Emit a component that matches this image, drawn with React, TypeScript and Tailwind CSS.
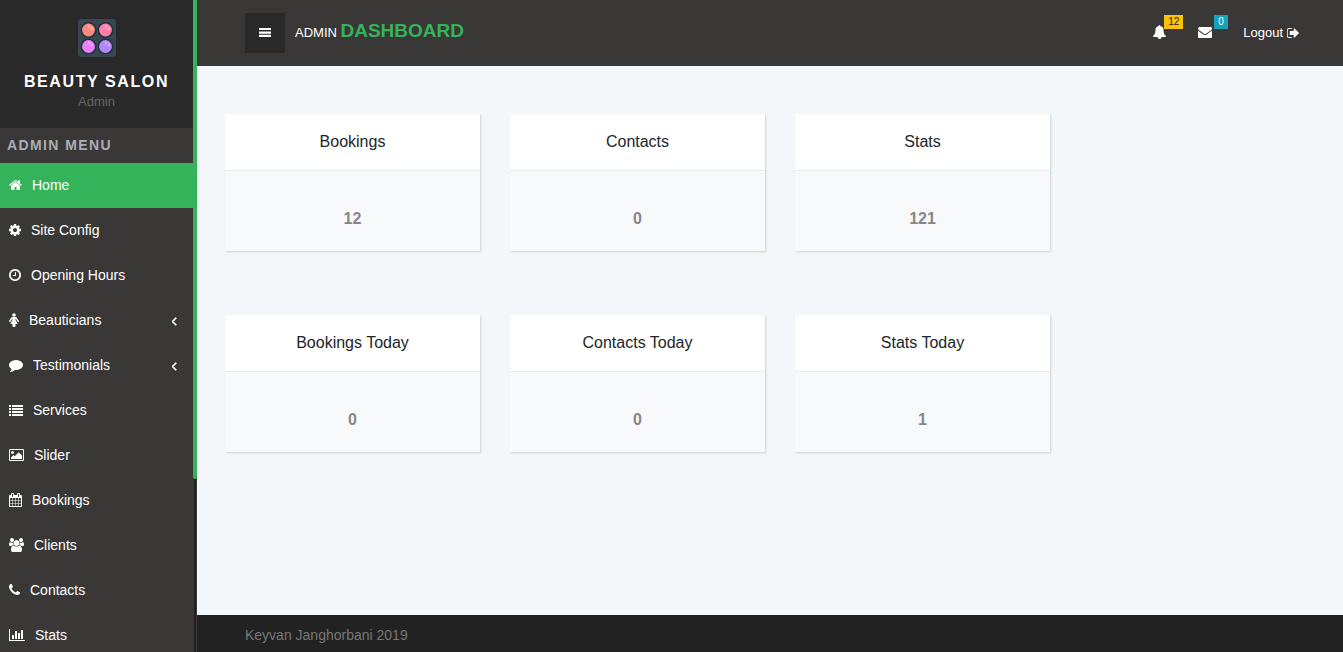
import { useState } from 'react';

type IconProps = { d: string; box?: string; className?: string };

// Font Awesome 4 glyphs, drawn on the 1792 grid
const icons = {
  home: 'M1472 992v480q0 26-19 45t-45 19h-384v-384h-256v384h-384q-26 0-45-19t-19-45v-480q0-1 .5-3t.5-3l575-474 575 474q1 2 1 6zm223-69l-62 74q-8 9-21 11h-3q-13 0-21-7l-692-577-692 577q-12 8-24 7-13-2-21-11l-62-74q-8-10-7-23.5t11-21.5l719-599q32-26 76-26t76 26l244 204v-195q0-14 9-23t23-9h192q14 0 23 9t9 23v408l219 182q10 8 11 21.5t-7 23.5z',
  cog: 'M1152 896q0-106-75-181t-181-75-181 75-75 181 75 181 181 75 181-75 75-181zm512-109v222q0 12-8 23t-20 13l-185 28q-19 54-39 91 35 50 107 138 10 12 10 25t-9 23q-27 37-99 108t-94 71q-12 0-26-9l-138-108q-44 23-91 38-16 136-29 186-7 28-36 28h-222q-14 0-24.5-8.5t-11.5-21.5l-28-184q-49-16-90-37l-141 107q-10 9-25 9-14 0-25-11-126-114-165-168-7-10-7-23 0-12 8-23 15-21 51-66.5t54-70.5q-27-50-41-99l-183-27q-13-2-21-12.5t-8-23.5v-222q0-12 8-23t19-13l186-28q14-46 39-92-40-57-107-138-10-12-10-24 0-10 9-23 26-36 98.5-107.5t94.5-71.5q13 0 26 10l138 107q44-23 91-38 16-136 29-186 7-28 36-28h222q14 0 24.5 8.5t11.5 21.5l28 184q49 16 90 37l142-107q9-9 24-9 13 0 25 10 129 119 165 170 7 8 7 22 0 12-8 23-15 21-51 66.5t-54 70.5q26 50 41 98l183 28q13 2 21 12.5t8 23.5z',
  clock: 'M1024 544v448q0 14-9 23t-23 9h-320q-14 0-23-9t-9-23v-64q0-14 9-23t23-9h224v-352q0-14 9-23t23-9h64q14 0 23 9t9 23zm416 352q0-148-73-273t-198-198-273-73-273 73-198 198-73 273 73 273 198 198 273 73 273-73 198-198 73-273zm224 0q0 209-103 385.5t-279.5 279.5-385.5 103-385.5-103-279.5-279.5-103-385.5 103-385.5 279.5-279.5 385.5-103 385.5 103 279.5 279.5 103 385.5z',
  female: 'M1536 1056q0 40-28 68t-68 28q-51 0-80-43l-227-341h-45v132l247 411q9 15 9 33 0 26-19 45t-45 19h-192v272q0 46-33 79t-79 33h-160q-46 0-79-33t-33-79v-272h-192q-26 0-45-19t-19-45q0-18 9-33l247-411v-132h-45l-227 341q-29 43-80 43-40 0-68-28t-28-68q0-29 16-53l256-384q73-107 176-107h384q103 0 176 107l256 384q16 24 16 53zm-416-800q0 93-65.5 158.5t-158.5 65.5-158.5-65.5-65.5-158.5 65.5-158.5 158.5-65.5 158.5 65.5 65.5 158.5z',
  comment: 'M1792 896q0 174-120 321.5t-326 233-450 85.5q-70 0-145-8-198 175-460 242-49 14-114 22-17 2-30.5-9t-17.5-29v-1q-3-4-.5-12t2-10 4.5-9.5l6-9 7-8.5 8-9q7-8 31-34.5t34.5-38 31-39.5 32.5-51 27-59 26-76q-157-89-247.5-220t-90.5-281q0-130 71-248.5t191-204.5 286-136.5 348-50.5q244 0 450 85.5t326 233 120 321.5z',
  list: 'M0 256h256v256h-256zM384 256h1408v256h-1408zM0 640h256v256h-256zM384 640h1408v256h-1408zM0 1024h256v256h-256zM384 1024h1408v256h-1408zM0 1408h256v256h-256zM384 1408h1408v256h-1408z',
  picture: 'M704 576q0 80-56 136t-136 56-136-56-56-136 56-136 136-56 136 56 56 136zm1024 384v448h-1408v-192l320-320 160 160 512-512zm96-704h-1600q-13 0-22.5 9.5t-9.5 22.5v1216q0 13 9.5 22.5t22.5 9.5h1600q13 0 22.5-9.5t9.5-22.5v-1216q0-13-9.5-22.5t-22.5-9.5zm160 32v1216q0 66-47 113t-113 47h-1600q-66 0-113-47t-47-113v-1216q0-66 47-113t113-47h1600q66 0 113 47t47 113z',
  calendar: 'M192 1664h288v-288h-288v288zm352 0h320v-288h-320v288zm-352-352h288v-320h-288v320zm352 0h320v-320h-320v320zm-352-384h288v-288h-288v288zm736 736h320v-288h-320v288zm-384-736h320v-288h-320v288zm768 736h288v-288h-288v288zm-384-352h320v-320h-320v320zm-352-864v-288q0-13-9.5-22.5t-22.5-9.5h-64q-13 0-22.5 9.5t-9.5 22.5v288q0 13 9.5 22.5t22.5 9.5h64q13 0 22.5-9.5t9.5-22.5zm736 864h288v-320h-288v320zm-384-384h320v-288h-320v288zm384 0h288v-288h-288v288zm32-480v-288q0-13-9.5-22.5t-22.5-9.5h-64q-13 0-22.5 9.5t-9.5 22.5v288q0 13 9.5 22.5t22.5 9.5h64q13 0 22.5-9.5t9.5-22.5zm384-64v1280q0 52-38 90t-90 38h-1408q-52 0-90-38t-38-90v-1280q0-52 38-90t90-38h128v-96q0-66 47-113t113-47h64q66 0 113 47t47 113v96h384v-96q0-66 47-113t113-47h64q66 0 113 47t47 113v96h128q52 0 90 38t38 90z',
  users: 'M657 896q-162 5-265 128h-134q-82 0-138-40.5t-56-118.5q0-353 124-353 6 0 43.5 21t97.5 42.5 119 21.5q67 0 133-23-5 37-5 66 0 139 81 256zm1071 637q0 120-73 189.5t-194 69.5h-874q-121 0-194-69.5t-73-189.5q0-53 3.5-103.5t14-109 26.5-108.5 43-97.5 62-81 85.5-53.5 111.5-20q10 0 43 21.5t73 48 107 48 135 21.5 135-21.5 107-48 73-48 43-21.5q61 0 111.5 20t85.5 53.5 62 81 43 97.5 26.5 108.5 14 109 3.5 103.5zm-1024-1277q0 106-75 181t-181 75-181-75-75-181 75-181 181-75 181 75 75 181zm704 384q0 159-112.5 271.5t-271.5 112.5-271.5-112.5-112.5-271.5 112.5-271.5 271.5-112.5 271.5 112.5 112.5 271.5zm576 225q0 78-56 118.5t-138 40.5h-134q-103-123-265-128 81-117 81-256 0-29-5-66 66 23 133 23 59 0 119-21.5t97.5-42.5 43.5-21q124 0 124 353zm-128-609q0 106-75 181t-181 75-181-75-75-181 75-181 181-75 181 75 75 181z',
  phone: 'M1600 1240q0 27-10 70.5t-21 68.5q-21 50-122 106-94 51-186 51-27 0-53-3.5t-57.5-12.5-47-14.5-55.5-20.5-49-18q-98-35-175-83-127-79-264-216t-216-264q-48-77-83-175-3-9-18-49t-20.5-55.5-14.5-47-12.5-57.5-3.5-53q0-92 51-186 56-101 106-122 25-11 68.5-21t70.5-10q14 0 21 3 18 6 53 76 11 19 30 54t35 63.5 31 53.5q3 4 17.5 25t21.5 35.5 7 28.5q0 20-28.5 50t-62 55-62 53-28.5 46q0 9 5 22.5t8.5 20.5 14 24 11.5 19q76 137 174 235t235 174q2 1 19 11.5t24 14 20.5 8.5 22.5 5q18 0 46-28.5t53-62 55-62 50-28.5q14 0 28.5 7t35.5 21.5 25 17.5q25 15 53.5 31t63.5 35 54 30q70 35 76 53 3 7 3 21z',
  chart: 'M640 896v512h-256v-512h256zm384-512v1024h-256v-1024h256zm1024 1152v128h-2048v-1536h128v1408h1920zm-640-896v768h-256v-768h256zm384-384v1152h-256v-1152h256z',
  angleLeft: 'M1203 544q0 13-10 23l-393 393 393 393q10 10 10 23t-10 23l-50 50q-10 10-23 10t-23-10l-466-466q-10-10-10-23t10-23l466-466q10-10 23-10t23 10l50 50q10 10 10 23z',
  bell: 'M912 1696q0-16-16-16-59 0-101.5-42.5t-42.5-101.5q0-16-16-16t-16 16q0 73 51.5 124.5t124.5 51.5q16 0 16-16zm816-288q0 52-38 90t-90 38h-448q0 106-75 181t-181 75-181-75-75-181h-448q-52 0-90-38t-38-90q50-42 91-88t85-119.5 74.5-158.5 50-206 19.5-260q0-152 117-282.5t307-158.5q-8-19-8-39 0-40 28-68t68-28 68 28 28 68q0 20-8 39 190 28 307 158.5t117 282.5q0 139 19.5 260t50 206 74.5 158.5 85 119.5 91 88z',
  envelope: 'M1792 710v794q0 66-47 113t-113 47h-1472q-66 0-113-47t-47-113v-794q44 49 101 87 362 246 497 345 57 42 92.5 65.5t94.5 48 110 24.5h2q51 0 110-24.5t94.5-48 92.5-65.5q170-123 498-345 57-39 100-87zm0-294q0 79-49 151t-122 123q-376 261-468 325-10 7-42.5 31t-54 38.5-52 32.5-57.5 27-50 9h-2q-23 0-50-9t-57.5-27-52-32.5-54-38.5-42.5-31q-91-64-262-182.5t-205-142.5q-62-42-117-115.5t-55-136.5q0-78 41.5-130t118.5-52h1472q65 0 112.5 47t47.5 113z',
  signOut: 'M704 1440q0 4 1 20t.5 26.5-3 23.5-10 19.5-20.5 6.5h-320q-119 0-203.5-84.5t-84.5-203.5v-704q0-119 84.5-203.5t203.5-84.5h320q13 0 22.5 9.5t9.5 22.5q0 4 1 20t.5 26.5-3 23.5-10 19.5-20.5 6.5h-320q-66 0-113 47t-47 113v704q0 66 47 113t113 47h312l11.5 1 11.5 3 8 5.5 7 9 2 13.5zm928-544q0 26-19 45l-544 544q-19 19-45 19t-45-19-19-45v-288h-448q-26 0-45-19t-19-45v-384q0-26 19-45t45-19h448v-288q0-26 19-45t45-19 45 19l544 544q19 19 19 45z',
};

const menu = [
  { label: 'Home', icon: icons.home, box: '64 0 1664 1920', size: 'w-[13px]' },
  { label: 'Site Config', icon: icons.cog, box: '128 0 1536 1920', size: 'w-3' },
  { label: 'Opening Hours', icon: icons.clock, box: '128 0 1536 1920', size: 'w-3' },
  { label: 'Beauticians', icon: icons.female, box: '256 0 1280 1920', size: 'w-2.5', sub: true },
  { label: 'Testimonials', icon: icons.comment, box: '0 0 1792 1920', size: 'w-3.5', sub: true },
  { label: 'Services', icon: icons.list, box: '0 0 1792 1920', size: 'w-3.5' },
  { label: 'Slider', icon: icons.picture, box: '64 0 1920 1920', size: 'w-[15px]' },
  { label: 'Bookings', icon: icons.calendar, box: '64 0 1664 1920', size: 'w-[13px]' },
  { label: 'Clients', icon: icons.users, box: '64 0 1920 1920', size: 'w-[15px]' },
  { label: 'Contacts', icon: icons.phone, box: '192 0 1408 1920', size: 'w-[11px]' },
  { label: 'Stats', icon: icons.chart, box: '0 0 2048 1920', size: 'w-4' },
];

const cards = [
  [
    { title: 'Bookings', value: 12 },
    { title: 'Contacts', value: 0 },
    { title: 'Stats', value: 121 },
  ],
  [
    { title: 'Bookings Today', value: 0 },
    { title: 'Contacts Today', value: 0 },
    { title: 'Stats Today', value: 1 },
  ],
];

function Icon({ d, box = '0 0 1792 1920', className = 'w-3.5' }: IconProps) {
  return (
    <svg viewBox={box} fill="currentColor" aria-hidden="true" className={`h-[15px] shrink-0 ${className}`}>
      <path d={d} />
    </svg>
  );
}

function Logo() {
  const pans = [
    { x: 10.5, y: 11, color: '#ff8a80' },
    { x: 27.5, y: 11, color: '#ff80ab' },
    { x: 10.5, y: 27.5, color: '#ea80fc' },
    { x: 27.5, y: 27.5, color: '#b388ff' },
  ];
  return (
    <svg viewBox="0 0 38 38" className="size-[38px]" aria-hidden="true">
      <rect width="38" height="38" rx="4" fill="#37474f" />
      {pans.map(p => (
        <g key={p.color}>
          <circle cx={p.x} cy={p.y} r="8" fill="#263238" />
          <circle cx={p.x} cy={p.y} r="6.4" fill={p.color} />
          <circle cx={p.x + 0.5} cy={p.y - 3.5} r="0.9" fill="#fff" opacity="0.6" />
          <circle cx={p.x + 3.3} cy={p.y - 1.5} r="0.9" fill="#fff" opacity="0.6" />
        </g>
      ))}
    </svg>
  );
}

function Sidebar() {
  const [active, setActive] = useState('Home');

  return (
    <aside className="sticky top-0 flex h-screen w-[197px] shrink-0 overflow-hidden bg-[#3a3836]">
      <div className="min-w-0 flex-1">
        {/* Brand */}
        <div className="flex h-32 flex-col items-center bg-[#292929] pt-[19px]">
          <Logo />
          <h1 className="mt-3.5 text-base leading-[22px] font-bold tracking-widest whitespace-nowrap text-white">BEAUTY SALON</h1>
          <p className="text-[13px] leading-[18px] text-[#666]">Admin</p>
        </div>

        <h2 className="pl-[7px] text-sm leading-[35px] font-bold tracking-widest text-[#a9afb5]">ADMIN MENU</h2>

        {/* Menu */}
        <nav>
          <ul>
            {menu.map(item => (
              <li key={item.label}>
                <a
                  href="#"
                  onClick={() => setActive(item.label)}
                  className={`flex h-[45px] items-center gap-2.5 pr-4 pl-[9px] text-sm text-white ${active === item.label ? 'bg-[#35b35b]' : 'hover:bg-[#292929]'}`}
                >
                  <Icon d={item.icon} box={item.box} className={item.size} />
                  <span className="flex-1 pb-0.5">{item.label}</span>
                  {item.sub && <Icon d={icons.angleLeft} box="640 -128 640 1920" className="w-[5px] stroke-current stroke-[90]" />}
                </a>
              </li>
            ))}
          </ul>
        </nav>
      </div>

      {/* Scroll track */}
      <div className="flex w-1 flex-col">
        <div className="h-[73.4%] rounded-b-xs bg-[#35b35b]" />
        <div className="ml-px w-0.5 flex-1 bg-[#222]" />
      </div>
    </aside>
  );
}

function Header() {
  return (
    <header className="flex h-[66px] items-center justify-between bg-[#3a3836] pr-11 pl-12 text-white">
      <div className="flex items-center gap-2.5">
        <button type="button" aria-label="Toggle menu" className="flex size-10 items-center justify-center bg-[#292929]">
          <svg viewBox="0 0 12 10" fill="currentColor" aria-hidden="true" className="h-2.5 w-3">
            <path d="M0 -.4h12v2.3H0zM0 3.4h12v2.3H0zM0 6.8h12v2.2H0z" />
          </svg>
        </button>
        <a href="#" className="pb-1 text-[13px]">
          ADMIN <strong className="text-[19px] text-[#35b35b]">DASHBOARD</strong>
        </a>
      </div>

      <div className="flex items-center text-[13px]">
        <a href="#" aria-label="Bookings" className="relative mr-8 pb-0.5">
          <Icon d={icons.bell} box="64 0 1664 1920" className="w-[13px]" />
          <span className="absolute -top-2.5 left-[11px] bg-[#ffc107] px-1 text-[10px] leading-3.5 text-[#212529]">12</span>
        </a>
        <a href="#" aria-label="Messages" className="relative mr-[31px] pb-0.5">
          <Icon d={icons.envelope} />
          <span className="absolute -top-2.5 left-4 bg-[#17a2b8] px-1 text-[10px] leading-3.5">0</span>
        </a>
        <a href="#" className="flex items-center gap-1">
          Logout
          <Icon d={icons.signOut} box="96 0 1536 1920" className="w-3" />
        </a>
      </div>
    </header>
  );
}

export default function App() {
  return (
    <div className="flex min-h-screen bg-[#f3f7fa] font-['Liberation_Sans',Arial,sans-serif]">
      <Sidebar />
      <div className="flex min-w-0 flex-1 flex-col">
        <Header />
        <main className="flex-1 space-y-16 pt-12 pr-2 pb-12 pl-7">
          {cards.map((row, i) => (
            <div key={i} className="grid grid-cols-4 gap-x-[30px]">
              {row.map(card => (
                <section key={card.title} className="bg-[#f8f9fb] text-center shadow-[1px_1px_2px_rgba(0,0,0,0.15)]">
                  <h3 className="border-b border-[#e9ecef] bg-white py-4 text-base text-[#212529]">{card.title}</h3>
                  <p className="pt-9 pb-5 text-base font-bold text-[#868686]">{card.value}</p>
                </section>
              ))}
            </div>
          ))}
        </main>
        <footer className="bg-[#222] pt-2.5 pb-1.5 pl-12 text-sm leading-[21px] text-[#777]">Keyvan Janghorbani 2019</footer>
      </div>
    </div>
  );
}
